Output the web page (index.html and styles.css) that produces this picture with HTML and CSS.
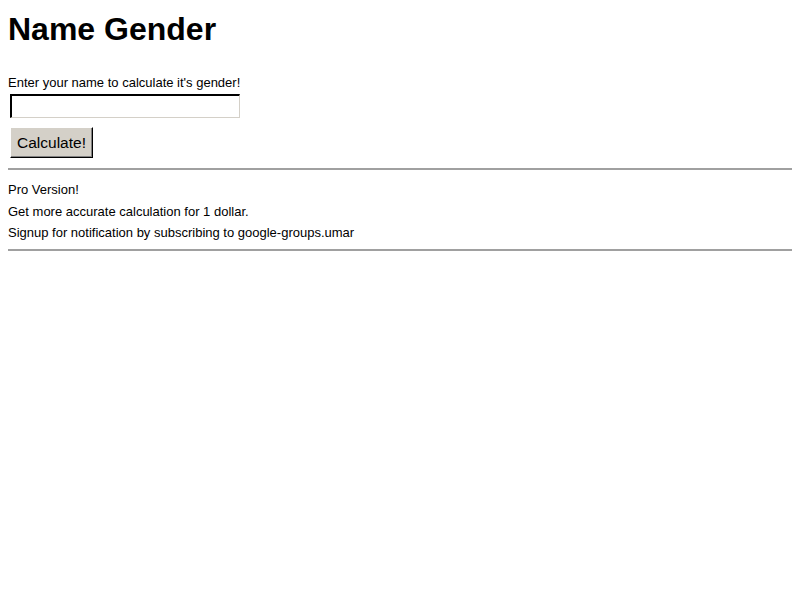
FILE: index.html
```html
<!DOCTYPE html>
<html>
<head>
<meta charset="utf-8">
<link rel="stylesheet" href="styles.css">
</head>
<body>
<h1 class="title">Name Gender</h1>
<form class="form">
<div class="label">Enter your name to calculate it's gender!</div>
<input class="name" type="text">
<button class="btn" type="button">Calculate!</button>
</form>
<hr class="rule">
<div class="pro">
<div class="line">Pro Version!</div>
<div class="line">Get more accurate calculation for 1 dollar.</div>
<div class="line">Signup for notification by subscribing to google-groups.umar</div>
</div>
<hr class="rule">
</body>
</html>
```

FILE: styles.css
```css
body {
  margin: 8px;
  font-family: "Liberation Sans", Arial, sans-serif;
  font-size: 13px;
  color: #000;
  background: #fff;
}
.title {
  margin: 3px 0 27px 0;
  font-size: 32px;
  font-weight: bold;
  line-height: 37px;
}
.form {
  display: flex;
  flex-direction: column;
  align-items: flex-start;
  margin: 0;
  padding-bottom: 10px;
}
.label {
  line-height: 15px;
}
.name {
  margin: 4px 0 0 2px;
  width: 227px;
  height: 21px;
  box-sizing: content-box;
  padding: 0;
  border-style: solid;
  border-width: 2px 1px 1px 2px;
  border-color: #000 #d4d0c8 #d4d0c8 #000;
  background: #fff;
}
.btn {
  margin: 9px 0 0 2px;
  width: 83px;
  height: 31px;
  padding: 0;
  font-family: "Liberation Sans", Arial, sans-serif;
  font-size: 15.5px;
  color: #000;
  background: #d4d0c8;
  border-style: solid;
  border-width: 1px;
  border-color: #fff #000 #000 #fff;
  box-shadow: inset -1px -1px 0 #808080;
}
.rule {
  margin: 0;
  height: 0;
  border: 0;
  border-top: 2px solid #a0a0a0;
}
.pro {
  padding: 9px 0 5px 0;
}
.line {
  line-height: 21.5px;
}
```
